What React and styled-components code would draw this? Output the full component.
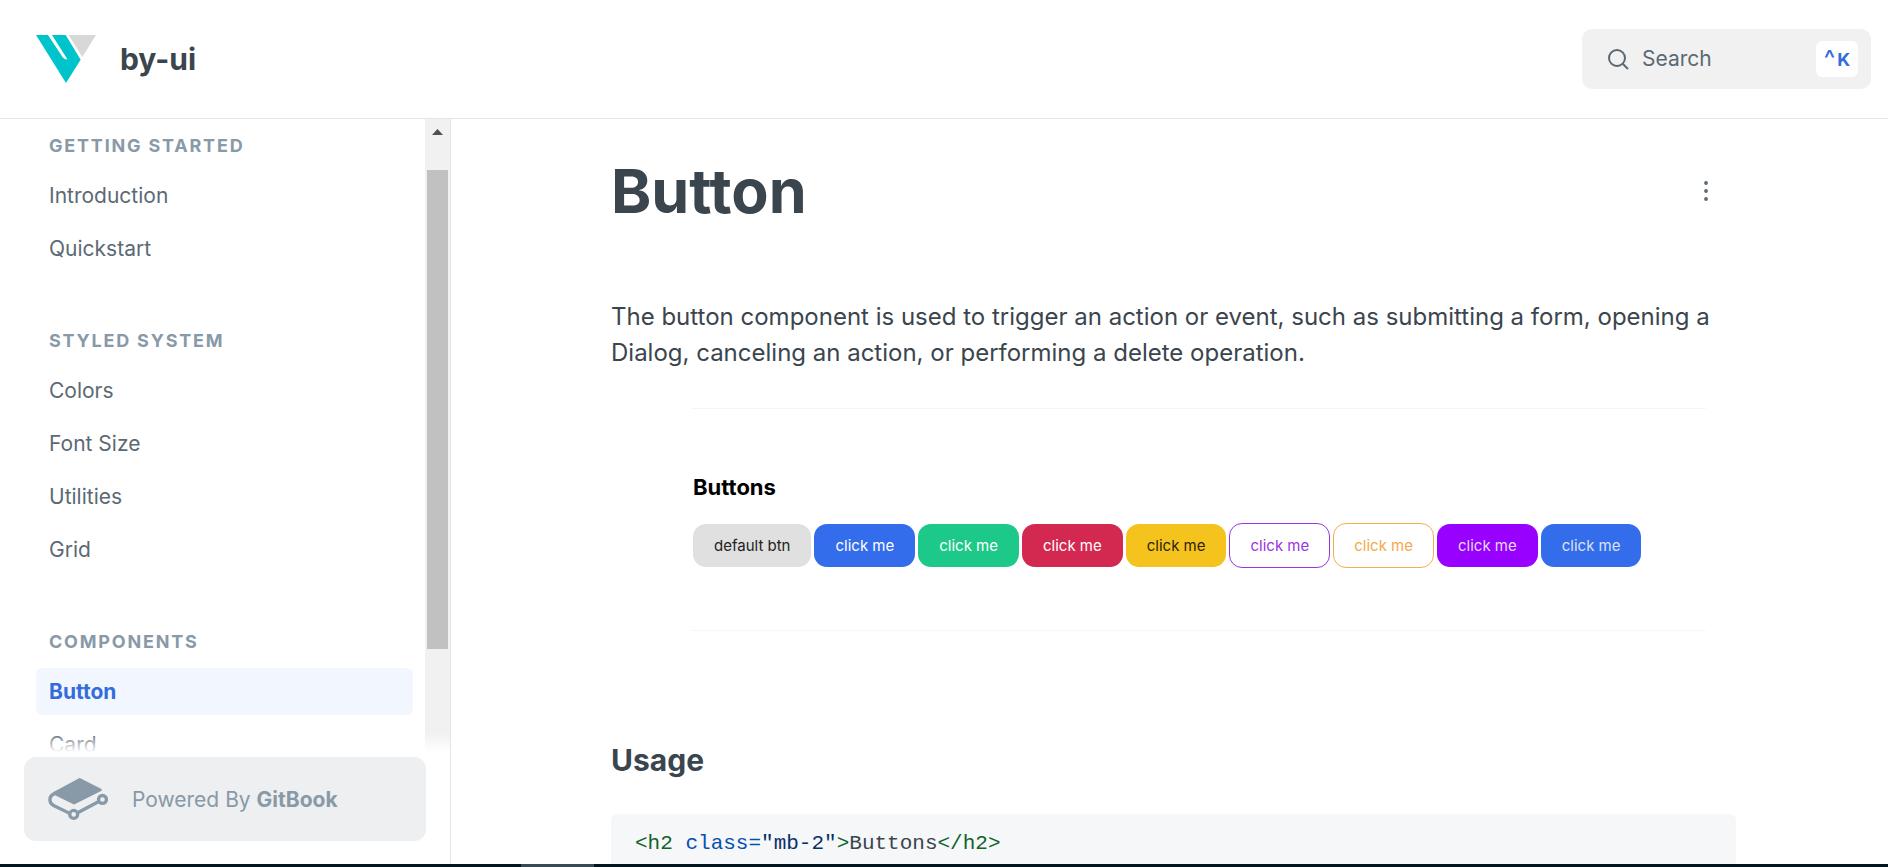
import React from "react";
import styled, { createGlobalStyle } from "styled-components";

const GlobalStyle = createGlobalStyle`
  *, *::before, *::after { box-sizing: border-box; }
  body { margin: 0; background: #fff; }
  h1, h2, h3, p, ul, figure, pre { margin: 0; padding: 0; }
  body, button, input { font-family: Inter, "Liberation Sans", sans-serif; }
`;

const Page = styled.div`
  display: grid;
  grid-template-rows: auto minmax(0, 1fr) auto;
  height: 100vh;
  overflow: hidden;
  color: #3b454e;
`;

/* Header */

const Header = styled.header`
  display: flex;
  align-items: center;
  justify-content: space-between;
  padding: 29px 17px 29px 36px;
  border-bottom: 1px solid #e3e5e6;
`;

const Brand = styled.a`
  display: flex;
  align-items: center;
  gap: 24px;
  color: inherit;
  font-size: 30px;
  font-weight: 700;
  line-height: 40px;
  text-decoration: none;
`;

const SearchBox = styled.label`
  display: flex;
  align-items: center;
  gap: 13px;
  width: 289px;
  height: 60px;
  padding: 0 13px 0 26px;
  border-radius: 10px;
  background: #f1f1f1;
  color: #5c6975;
`;

const SearchInput = styled.input`
  flex: 1;
  min-width: 0;
  padding: 0;
  border: 0;
  outline: 0;
  background: transparent;
  color: #5c6975;
  font-size: 21px;
  line-height: 30px;

  &::placeholder { color: #5c6975; opacity: 1; }
`;

const Shortcut = styled.kbd`
  display: flex;
  align-items: center;
  justify-content: center;
  gap: 2px;
  width: 42px;
  height: 36px;
  border-radius: 6px;
  background: #fff;
  color: #346ddb;
  font-family: Inter, sans-serif;
  font-size: 18px;
  font-weight: 700;
`;

const Caret = styled.span`
  font-size: 24px;
  font-weight: 500;
  line-height: 24px;
`;

/* Sidebar */

const Body = styled.div`
  display: grid;
  grid-template-columns: 451px minmax(0, 1fr);
  min-height: 0;
`;

const Sidebar = styled.aside`
  display: flex;
  flex-direction: column;
  min-height: 0;
  border-right: 1px solid #e3e5e6;
`;

const ScrollArea = styled.div`
  position: relative;
  display: flex;
  flex: 1;
  min-height: 0;
  overflow: hidden;

  &::after {
    content: "";
    position: absolute;
    inset: auto 0 0 0;
    height: 24px;
    background: linear-gradient(rgba(255, 255, 255, 0), #fff 80%);
  }
`;

const Nav = styled.nav`
  display: flex;
  flex: 1;
  flex-direction: column;
  gap: 57px;
  padding: 15px 12px 0 36px;
`;

const NavTitle = styled.h3`
  margin-bottom: 14px;
  padding-left: 13px;
  color: #8899a8;
  font-size: 18px;
  font-weight: 700;
  letter-spacing: 0.1em;
  line-height: 24px;
  text-transform: uppercase;
`;

const NavList = styled.ul`
  display: flex;
  flex-direction: column;
  gap: 6px;
  list-style: none;
`;

const NavLink = styled.a`
  display: block;
  padding: 0 13px;
  border-radius: 6px;
  background: ${(p) => (p.$active ? "#f2f6fe" : "transparent")};
  color: ${(p) => (p.$active ? "#346ddb" : "#5c6975")};
  font-size: 21px;
  font-weight: ${(p) => (p.$active ? 700 : 400)};
  line-height: 47px;
  text-decoration: none;
`;

const ScrollTrack = styled.div`
  display: flex;
  flex-direction: column;
  align-items: center;
  width: 25px;
  background: #f1f1f1;
`;

const ScrollUp = styled.div`
  display: flex;
  align-items: center;
  justify-content: center;
  height: 26px;
  margin-bottom: 25px;
`;

const ScrollThumb = styled.div`
  width: 21px;
  height: 75%;
  background: #c1c1c1;
`;

const SidebarFooter = styled.footer`
  padding: 0 24px 23px;
`;

const PoweredBy = styled.a`
  display: flex;
  align-items: center;
  gap: 24px;
  height: 84px;
  padding: 0 24px;
  border-radius: 12px;
  background: #edeff0;
  color: #8899a8;
  font-size: 21px;
  text-decoration: none;

  strong { font-weight: 700; }
`;

/* Article */

const Article = styled.main`
  min-width: 0;
  overflow: hidden;
  padding: 36px 152px 0 160px;
`;

const TitleRow = styled.div`
  display: flex;
  align-items: center;
  justify-content: space-between;
  margin-bottom: 72px;
`;

const Title = styled.h1`
  font-size: 61px;
  font-weight: 700;
  line-height: 72px;
`;

const MoreButton = styled.button`
  display: flex;
  align-items: center;
  justify-content: center;
  width: 60px;
  height: 48px;
  padding: 0;
  border: 0;
  background: none;
  color: #5c6975;
`;

const Lead = styled.p`
  font-size: 24px;
  line-height: 36px;
`;

const Preview = styled.figure`
  margin: 37px 30px 0 82px;
  padding: 64px 0 62px;
  border: 1px dotted #ececec;
  border-width: 1px 0;
`;

const PreviewTitle = styled.h2`
  margin-bottom: 22px;
  color: #000;
  font-size: 22px;
  font-weight: 700;
  line-height: 28px;
`;

const ButtonRow = styled.div`
  display: flex;
  align-items: center;
  gap: 3px;
`;

const DemoButton = styled.button`
  height: ${(p) => (p.$outline ? 45 : 43)}px;
  padding: 0 ${(p) => (p.$outline ? 20 : 21)}px;
  border: ${(p) => (p.$outline ? `1px solid ${p.$outline}` : "0")};
  border-radius: 13px;
  background: ${(p) => p.$fill || "#fff"};
  color: ${(p) => p.$text};
  font-size: 15px;
  white-space: nowrap;
`;

const SectionTitle = styled.h2`
  margin: 109px 0 34px;
  font-size: 30px;
  font-weight: 700;
  line-height: 40px;
`;

const CodeBlock = styled.pre`
  padding: 15px 24px 24px;
  border-radius: 6px;
  background: #f5f7f9;
  color: #3b454e;
  font-family: "Liberation Mono", monospace;
  font-size: 21px;
  line-height: 30px;

  code { font-family: inherit; }
`;

const Token = styled.span`
  color: ${(p) => ({ tag: "#116329", attr: "#0550ae", string: "#0a3069" })[p.$kind]};
`;

const Taskbar = styled.div`
  display: flex;
  height: 3px;
  padding-left: 521px;
  background: #03151f;
`;

const TaskbarItem = styled.div`
  width: 73px;
  background: #3a4a54;
`;

/* Drawings */

const Logo = () => (
  <svg width="60" height="48" viewBox="0 0 180 144" aria-hidden="true">
    <path
      fill="#00c4cc"
      d="M0 0H36L80 67Q85 74 94 73L48 0H89L134 74L90 144Z"
    />
    <path fill="#d8d8d8" d="M98 0H180L139 66Z" />
  </svg>
);

const SearchIcon = () => (
  <svg width="21" height="21" viewBox="0 0 21 21" fill="none" stroke="currentColor" strokeWidth="2" aria-hidden="true">
    <circle cx="9" cy="9" r="8" />
    <path d="M14.7 14.7L20 20" />
  </svg>
);

const BookIcon = () => (
  <svg width="60" height="42" viewBox="0 0 180 127" fill="none" stroke="currentColor" aria-hidden="true">
    <path
      fill="currentColor"
      strokeWidth="8"
      strokeLinejoin="round"
      d="M95 4L158 36L78 76L18 46Z"
    />
    <path
      strokeWidth="10"
      d="M24 45C10 50 5 56 5 65C5 74 8 79 16 83L65 107M89 105L153 71"
    />
    <circle cx="77" cy="110" r="12" strokeWidth="10" />
    <circle cx="164" cy="65" r="12" strokeWidth="10" />
  </svg>
);

const DotsIcon = () => (
  <svg width="4" height="20" viewBox="0 0 4 20" fill="currentColor" aria-hidden="true">
    <circle cx="2" cy="2" r="1.9" />
    <circle cx="2" cy="10" r="1.9" />
    <circle cx="2" cy="18" r="1.9" />
  </svg>
);

const ArrowUp = () => (
  <svg width="11" height="6" viewBox="0 0 11 6" fill="#505050" aria-hidden="true">
    <path d="M5.5 0L11 6H0Z" />
  </svg>
);

const sections = [
  { title: "Getting Started", items: ["Introduction", "Quickstart"] },
  { title: "Styled System", items: ["Colors", "Font Size", "Utilities", "Grid"] },
  { title: "Components", items: ["Button", "Card"] },
];

const demoButtons = [
  { label: "default btn", fill: "#e0e0e0", text: "#222" },
  { label: "click me", fill: "#336dec", text: "#fff" },
  { label: "click me", fill: "#1dc988", text: "#fff" },
  { label: "click me", fill: "#d3284f", text: "#fff" },
  { label: "click me", fill: "#f5c31d", text: "#2a2410" },
  { label: "click me", outline: "#9a35e0", text: "#9a35e0" },
  { label: "click me", outline: "#f3b04a", text: "#f3a94a" },
  { label: "click me", fill: "#9800ff", text: "#e2dcec" },
  { label: "click me", fill: "#336dec", text: "#dce2f0" },
];

export default function App() {
  return (
    <>
      <GlobalStyle />
      <Page>
        <Header>
          <Brand href="#">
            <Logo />
            by-ui
          </Brand>
          <SearchBox>
            <SearchIcon />
            <SearchInput type="text" placeholder="Search" aria-label="Search" />
            <Shortcut>
              <Caret>^</Caret>
              <span>K</span>
            </Shortcut>
          </SearchBox>
        </Header>

        <Body>
          <Sidebar>
            <ScrollArea>
              <Nav>
                {sections.map((section) => (
                  <section key={section.title}>
                    <NavTitle>{section.title}</NavTitle>
                    <NavList>
                      {section.items.map((item) => (
                        <li key={item}>
                          <NavLink href="#" $active={item === "Button"}>
                            {item}
                          </NavLink>
                        </li>
                      ))}
                    </NavList>
                  </section>
                ))}
              </Nav>
              <ScrollTrack>
                <ScrollUp>
                  <ArrowUp />
                </ScrollUp>
                <ScrollThumb />
              </ScrollTrack>
            </ScrollArea>
            <SidebarFooter>
              <PoweredBy href="#">
                <BookIcon />
                <span>
                  Powered By <strong>GitBook</strong>
                </span>
              </PoweredBy>
            </SidebarFooter>
          </Sidebar>

          <Article>
            <TitleRow>
              <Title>Button</Title>
              <MoreButton aria-label="More options">
                <DotsIcon />
              </MoreButton>
            </TitleRow>
            <Lead>
              The button component is used to trigger an action or event, such as
              submitting a form, opening a Dialog, canceling an action, or
              performing a delete operation.
            </Lead>
            <Preview>
              <PreviewTitle>Buttons</PreviewTitle>
              <ButtonRow>
                {demoButtons.map((b, i) => (
                  <DemoButton key={i} $fill={b.fill} $outline={b.outline} $text={b.text}>
                    {b.label}
                  </DemoButton>
                ))}
              </ButtonRow>
            </Preview>
            <SectionTitle>Usage</SectionTitle>
            <CodeBlock>
              <code>
                <Token $kind="tag">&lt;h2</Token>{" "}
                <Token $kind="attr">class=</Token>
                <Token $kind="string">"mb-2"</Token>
                <Token $kind="tag">&gt;</Token>
                Buttons
                <Token $kind="tag">&lt;/h2&gt;</Token>
              </code>
            </CodeBlock>
          </Article>
        </Body>

        <Taskbar>
          <TaskbarItem />
        </Taskbar>
      </Page>
    </>
  );
}
